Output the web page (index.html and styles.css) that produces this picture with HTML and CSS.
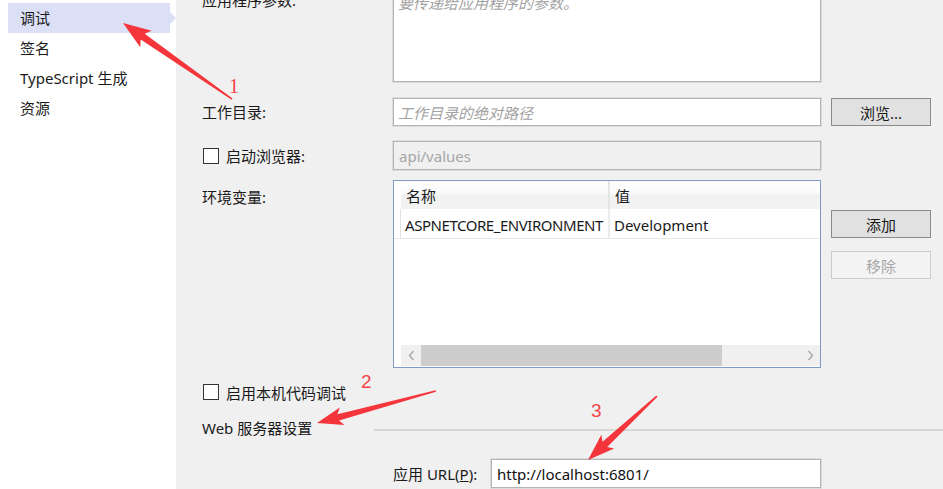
FILE: index.html
```html
<!DOCTYPE html>
<html lang="zh-CN">
<head>
<meta charset="utf-8">
<title>调试</title>
<link rel="stylesheet" href="styles.css">
</head>
<body>
<div class="page">
  <aside class="sidebar">
    <div class="nav-item active">调试</div>
    <div class="nav-item">签名</div>
    <div class="nav-item">TypeScript 生成</div>
    <div class="nav-item">资源</div>
  </aside>
  <main class="main">
    <div class="row row-args">
      <div class="lbl lbl-top">应用程序参数:</div>
      <div class="textarea"><span class="ph">要传递给应用程序的参数。</span></div>
    </div>
    <div class="row row-dir">
      <div class="lbl">工作目录:</div>
      <div class="input"><span class="ph">工作目录的绝对路径</span></div>
      <button class="btn">浏览...</button>
    </div>
    <div class="row row-browser">
      <div class="lbl check"><span class="box"></span>启动浏览器:</div>
      <div class="input disabled">api/values</div>
    </div>
    <div class="row row-env">
      <div class="lbl lbl-env">环境变量:</div>
      <div class="grid">
        <div class="g-head">
          <div class="g-gut"></div>
          <div class="g-c c1">名称</div>
          <div class="g-c c2">值</div>
        </div>
        <div class="g-row">
          <div class="g-gut"></div>
          <div class="g-c c1 tight">ASPNETCORE_ENVIRONMENT</div>
          <div class="g-c c2">Development</div>
        </div>
        <div class="g-fill"></div>
        <div class="g-scroll">
          <div class="g-gut"></div>
          <div class="sb-btn"><svg width="7" height="11" viewBox="0 0 7 11"><polyline points="5.5,1 1.5,5.5 5.5,10" fill="none" stroke="#a8a8a8" stroke-width="1.4"/></svg></div>
          <div class="sb-thumb"></div>
          <div class="sb-track"></div>
          <div class="sb-btn"><svg width="7" height="11" viewBox="0 0 7 11"><polyline points="1.5,1 5.5,5.5 1.5,10" fill="none" stroke="#a8a8a8" stroke-width="1.4"/></svg></div>
        </div>
      </div>
      <div class="btn-col">
        <button class="btn">添加</button>
        <button class="btn" disabled>移除</button>
      </div>
    </div>
    <div class="check-row"><span class="box"></span>启用本机代码调试</div>
    <div class="section"><span class="section-title">Web 服务器设置</span><span class="rule"></span></div>
    <div class="row row-url">
      <div></div>
      <div class="url-field">
        <span class="url-lbl">应用 URL(<u>P</u>):</span>
        <div class="input url">http://localhost:6801/</div>
      </div>
    </div>
  </main>
  <div class="annot">
    <svg class="annot-svg" width="943" height="489" viewBox="0 0 943 489">
      <polygon transform="translate(123 23) rotate(34.9)" points="0,0 28,-10 24,-3.5 133,-0.8 133,0.8 24,3.5 28,10" fill="#f4363c"/>
      <polygon transform="translate(317 423) rotate(-15.05)" points="0,0 26,-9 22,-3.2 123,-0.8 123,0.8 22,3.2 26,9" fill="#f4363c"/>
      <polygon transform="translate(588 460) rotate(-42.85)" points="0,0 27,-9.5 23,-3.5 94,-0.8 94,0.8 23,3.5 27,9.5" fill="#f4363c"/>
    </svg>
    <span class="num n1">1</span>
    <span class="num n2">2</span>
    <span class="num n3">3</span>
  </div>
</div>
</body>
</html>
```

FILE: styles.css
```css
* { box-sizing: border-box; }
html, body { margin: 0; padding: 0; }
body {
  width: 943px;
  height: 489px;
  overflow: hidden;
  background: #f0f0f0;
  font-family: "Noto Sans", "Noto Sans CJK SC", sans-serif;
  font-size: 15px;
  color: #1a1a1a;
}
.page {
  position: relative;
  display: flex;
  height: 489px;
}
.sidebar {
  width: 176px;
  flex: none;
  background: #ffffff;
  padding-top: 3px;
}
.nav-item {
  position: relative;
  margin-left: 8px;
  width: 162px;
  height: 30px;
  padding-left: 12px;
  line-height: 30px;
  white-space: nowrap;
}
.nav-item.active { background: #dbe0f7; }
.nav-item.active::after {
  content: "";
  position: absolute;
  right: -6px;
  top: 9px;
  border-left: 6px solid #dbe0f7;
  border-top: 6px solid transparent;
  border-bottom: 6px solid transparent;
}
.main {
  flex: 1;
  padding-left: 26px;
  display: flex;
  flex-direction: column;
}
.row {
  display: grid;
  grid-template-columns: 181px 428px 100px;
  column-gap: 10px;
}
.lbl {
  display: flex;
  align-items: center;
  white-space: nowrap;
}
.row-args { margin-top: -8px; height: 90px; }
.lbl-top { align-items: flex-start; margin-top: -3px; }
.textarea {
  background: #fff;
  border: 1px solid #b4b4b4;
  box-shadow: 0 0 0 1px #dcdcdc;
  padding: 0 4px;
  line-height: 20px;
}
.ph { color: #a2a2a2; font-style: italic; }
.row-dir { margin-top: 16px; height: 28px; }
.row-dir .lbl { padding-bottom: 2px; }
.input {
  background: #fff;
  border: 1px solid #b4b4b4;
  box-shadow: 0 0 0 1px #dcdcdc;
  padding: 0 4px;
  display: flex;
  align-items: center;
  white-space: nowrap;
}
.input.disabled {
  background: #f0f0f0;
  color: #a6a6a6;
  padding-left: 5px;
}
.btn {
  font: inherit;
  color: #1a1a1a;
  background: #e1e1e1;
  border: 1px solid #8a8a8a;
  height: 28px;
  padding: 0;
  margin: 0;
}
.btn:disabled {
  background: #f4f4f4;
  border-color: #cccccc;
  color: #a6a6a6;
}
.row-browser { margin-top: 15px; height: 29px; }
.check { padding-left: 1px; }
.box {
  width: 16px;
  height: 16px;
  border: 1px solid #333;
  background: #fff;
  margin-right: 7px;
  flex: none;
}
.row-env { margin-top: 10px; height: 188px; }
.lbl-env { align-items: flex-start; padding-top: 6px; }
.grid {
  border: 1px solid #7e9bc8;
  background: #fff;
  display: flex;
  flex-direction: column;
  padding-bottom: 1px;
}
.g-head, .g-row, .g-scroll { display: flex; flex: none; }
.g-gut { width: 7px; flex: none; }
.g-head { height: 28px; }
.g-head .g-c {
  background: linear-gradient(#ffffff 0%, #fafafa 45%, #f1f1f1 50%, #f3f3f3 100%);
  border-right: 2px solid #e6e6e6;
}
.g-c {
  display: flex;
  align-items: center;
  padding-left: 5px;
  white-space: nowrap;
  overflow: hidden;
}
.c1 { width: 209px; flex: none; }
.c2 { flex: 1; }
.g-head .c2 { border-right: 0; }
.g-row { height: 30px; border-bottom: 1px solid #e8e8e8; }
.g-row .g-gut { border-right: 1px solid #e2e2e2; }
.g-row .g-c { padding-top: 3px; }
.g-row .c1 { border-right: 2px solid #ececec; padding-left: 4px; }
.g-row .c2 { padding-left: 4px; }
.tight { letter-spacing: -0.45px; }
.g-fill { flex: 1; }
.g-scroll { height: 21px; }
.g-scroll .g-gut { width: 7px; }
.sb-btn {
  width: 20px;
  flex: none;
  background: #f0f0f0;
  display: flex;
  align-items: center;
  justify-content: center;
}
.sb-btn:last-child { width: 19px; }
.sb-thumb { width: 301px; flex: none; background: #cdcdcd; }
.sb-track { flex: 1; background: #f0f0f0; }
.btn-col {
  display: flex;
  flex-direction: column;
  gap: 13px;
  padding-top: 30px;
}
.check-row {
  margin-top: 16px;
  height: 16px;
  display: flex;
  align-items: center;
  padding-left: 1px;
  white-space: nowrap;
}
.section {
  margin-top: 17px;
  height: 20px;
  display: flex;
  align-items: center;
}
.section-title { white-space: nowrap; width: 172px; flex: none; }
.rule {
  flex: 1;
  height: 2px;
  margin-top: 6px;
  background: #d6d6d6;
  margin-right: -10px;
}
.row-url { margin-top: 22px; height: 29px; }
.url-field { display: flex; align-items: stretch; }
.url-lbl { width: 98px; flex: none; display: flex; align-items: center; white-space: nowrap; }
.input.url { flex: 1; color: #111; padding-left: 5px; }
.annot {
  position: absolute;
  left: 0;
  top: 0;
  width: 943px;
  height: 489px;
  pointer-events: none;
}
.annot-svg { position: absolute; left: 0; top: 0; }
.num {
  position: absolute;
  color: #f4454a;
  font-size: 20px;
  line-height: 20px;
}
.n1 { left: 229px; top: 76px; font-family: "Liberation Serif", serif; }
.n2 { left: 361px; top: 372px; font-family: "Liberation Sans", sans-serif; font-size: 19px; }
.n3 { left: 591px; top: 401px; font-family: "Liberation Sans", sans-serif; font-size: 19px; }
```
